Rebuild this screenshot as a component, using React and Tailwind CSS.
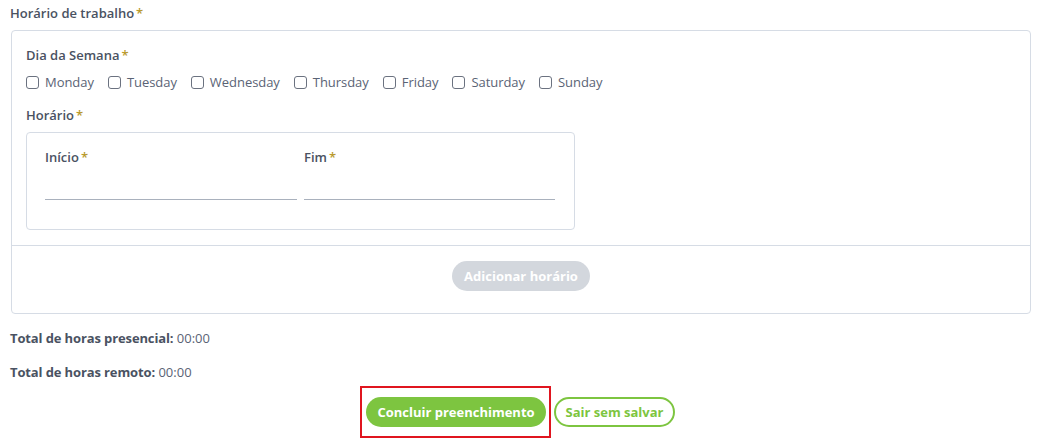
// Formulario de horario de trabalho: dias da semana, inicio/fim e totais.
import { useState } from "react";

const DIAS = ["Monday", "Tuesday", "Wednesday", "Thursday", "Friday", "Saturday", "Sunday"];

function Obrigatorio() {
  return <span className="text-[#b99a2e] ml-[2px]">*</span>;
}

function App() {
  const [dias, setDias] = useState({});
  const [inicio, setInicio] = useState("");
  const [fim, setFim] = useState("");

  function marca(dia) {
    setDias({ ...dias, [dia]: !dias[dia] });
  }

  return (
    <div className="w-[1054px] h-[442px] bg-white text-[13px] leading-[20px] text-[#4d5566]"
      style={{ fontFamily: '"Open Sans", "Liberation Sans", sans-serif' }}>
      <div className="pt-[3px] pl-[10px] font-semibold text-[#4a5262]">
        Horário de trabalho<Obrigatorio />
      </div>

      <div className="ml-[11px] mt-[7px] w-[1020px] border border-[#d6dce5] rounded-[4px]">
        <div className="px-[14px] pt-[14px] pb-[15px]">
          <div className="font-semibold text-[#4a5262]">Dia da Semana<Obrigatorio /></div>

          <div className="flex items-center gap-[14px] mt-[7px]">
            {DIAS.map((d) => (
              <label key={d} className="flex items-center gap-[6px] text-[#5a6375] cursor-pointer tracking-[-0.05px]">
                <input type="checkbox" checked={!!dias[d]} onChange={() => marca(d)}
                  className="appearance-none w-[13px] h-[13px] border border-[#6b7280] rounded-[3px] bg-white checked:bg-[#7dc540] checked:border-[#7dc540]" />
                {d}
              </label>
            ))}
          </div>

          <div className="mt-[13px] font-semibold text-[#4a5262]">Horário<Obrigatorio /></div>

          <div className="mt-[7px] w-[549px] h-[98px] border border-[#d6dce5] rounded-[4px] pl-[18px] pr-[18px] pt-[14px]">
            <div className="flex gap-[7px]">
              <div className="w-[252px]">
                <div className="font-semibold text-[#4a5262]">Início<Obrigatorio /></div>
                <input value={inicio} onChange={(e) => setInicio(e.target.value)}
                  className="w-full h-[33px] border-b border-[#a9b1bd] outline-none bg-transparent" />
              </div>
              <div className="w-[251px]">
                <div className="font-semibold text-[#4a5262]">Fim<Obrigatorio /></div>
                <input value={fim} onChange={(e) => setFim(e.target.value)}
                  className="w-full h-[33px] border-b border-[#a9b1bd] outline-none bg-transparent" />
              </div>
            </div>
          </div>
        </div>

        <div className="border-t border-[#d6dce5] flex justify-center pt-[15px] pb-[22px]">
          <button disabled
            className="w-[138px] h-[30px] rounded-full bg-[#d3d7dd] text-white font-bold">
            Adicionar horário
          </button>
        </div>
      </div>

      <div className="pl-[10px] mt-[14px] text-[#5a6375]">
        <span className="font-bold text-[#4a5262] tracking-[-0.12px]">Total de horas presencial:</span> 00:00
      </div>
      <div className="pl-[10px] mt-[14px] text-[#5a6375]">
        <span className="font-bold text-[#4a5262] tracking-[-0.12px]">Total de horas remoto:</span> 00:00
      </div>

      <div className="w-[1035px] flex justify-center items-center gap-[3px] mt-[4px]">
        <div className="border-2 border-[#e0151f] pl-[4px] pr-[3px] py-[9px]">
          <button className="w-[180px] h-[30px] rounded-full bg-[#7dc540] text-white font-bold">
            Concluir preenchimento
          </button>
        </div>
        <button className="w-[121px] h-[30px] rounded-full border-2 border-[#7dc540] text-[#7dc540] font-bold bg-white">
          Sair sem salvar
        </button>
      </div>
    </div>
  );
}

export default App;
